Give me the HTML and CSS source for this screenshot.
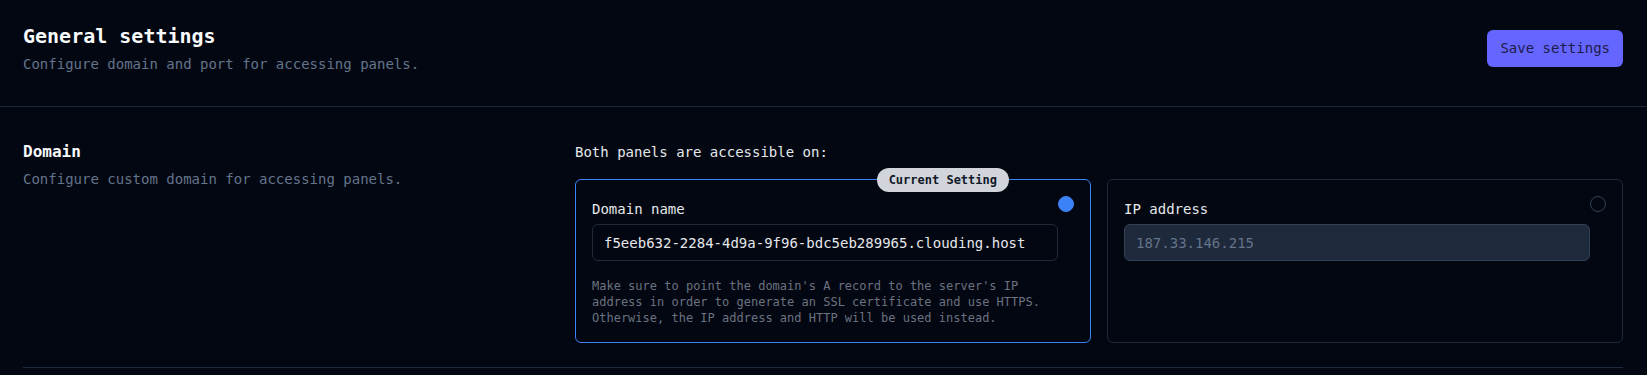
FILE: index.html
```html
<!DOCTYPE html>
<html lang="en">

<head>
    <meta charset="UTF-8">
    <meta name="viewport" content="width=device-width, initial-scale=1.0">
    <title>General settings</title>
    <link rel="stylesheet" href="styles.css">
</head>

<body>

    <div class="page-header">
        <div>
            <h1>General settings</h1>
            <p>Configure domain and port for accessing panels.</p>
        </div>
        <button class="save-btn">Save settings</button>
    </div>

    <div class="content">
        <div class="setting-row">
            <div class="setting-info">
                <h2>Domain</h2>
                <p>Configure custom domain for accessing panels.</p>
            </div>

            <div class="setting-body">
                <p class="setting-lead">Both panels are accessible on:</p>

                <div class="option-grid">
                    <div class="option-card selected">
                        <span class="badge">Current Setting</span>
                        <div class="option-main">
                            <label class="option-label">Domain name</label>
                            <input class="option-input" type="text" value="f5eeb632-2284-4d9a-9f96-bdc5eb289965.clouding.host">
                            <p class="option-help">Make sure to point the domain's A record to the server's IP address in order to generate an SSL certificate and use HTTPS. Otherwise, the IP address and HTTP will be used instead.</p>
                        </div>
                        <span class="radio checked"></span>
                    </div>

                    <div class="option-card">
                        <div class="option-main">
                            <label class="option-label">IP address</label>
                            <input class="option-input" type="text" value="187.33.146.215" disabled>
                        </div>
                        <span class="radio"></span>
                    </div>
                </div>
            </div>
        </div>
    </div>

</body>

</html>
```

FILE: styles.css
```css
* {
    margin: 0;
    padding: 0;
    box-sizing: border-box;
    font-family: "DejaVu Sans Mono", "Liberation Mono", monospace;
}

body {
    background-color: #030712;
    color: #e5e7eb;
}

.page-header {
    display: flex;
    justify-content: space-between;
    align-items: center;
    padding: 22px 24px 32px 23px;
    border-bottom: 1px solid #1e293b;
}

.page-header h1 {
    font-size: 20px;
    line-height: 28px;
    font-weight: 700;
    color: #f8fafc;
}

.page-header p {
    font-size: 14px;
    line-height: 20px;
    margin-top: 4px;
    color: #64748b;
}

.save-btn {
    background-color: #6466ff;
    color: #1e1b4b;
    border: none;
    border-radius: 6px;
    font-size: 14px;
    line-height: 21px;
    padding: 8px 13px;
    cursor: pointer;
}

.content {
    padding: 0 24px 0 23px;
}

.setting-row {
    display: grid;
    grid-template-columns: 552px 1fr;
    padding: 33px 0 24px;
    border-bottom: 1px solid #1e293b;
}

.setting-info h2 {
    font-size: 16px;
    line-height: 24px;
    font-weight: 700;
    color: #f8fafc;
}

.setting-info p {
    font-size: 14px;
    line-height: 20px;
    margin-top: 5px;
    color: #64748b;
}

.setting-lead {
    font-size: 14px;
    line-height: 24px;
    color: #e5e7eb;
}

.option-grid {
    display: grid;
    grid-template-columns: 1fr 1fr;
    gap: 16px;
    margin-top: 15px;
}

.option-card {
    position: relative;
    display: flex;
    border: 1px solid #1f2937;
    border-radius: 6px;
    padding: 16px;
}

.option-card.selected {
    border-color: #3b82f6;
}

.badge {
    position: absolute;
    top: -12px;
    right: 81px;
    height: 24px;
    line-height: 24px;
    padding: 0 12px;
    border-radius: 12px;
    background-color: #d1d5db;
    color: #111827;
    font-size: 12px;
    font-weight: 700;
}

.option-main {
    flex-grow: 1;
    display: flex;
    flex-direction: column;
}

.option-label {
    font-size: 14px;
    line-height: 26px;
    color: #e5e7eb;
}

.option-input {
    margin-top: 2px;
    height: 37px;
    padding: 0 11px;
    border: 1px solid #1f2937;
    border-radius: 6px;
    background-color: transparent;
    color: #e5e7eb;
    font-size: 14px;
    outline: none;
}

.option-input:disabled {
    background-color: #1e293b;
    border-color: #334155;
    color: #64748b;
}

.option-help {
    margin-top: 17px;
    font-size: 12px;
    line-height: 16px;
    color: #6b7280;
}

.radio {
    flex: none;
    width: 16px;
    height: 16px;
    border-radius: 50%;
    border: 1.5px solid #334155;
}

.radio.checked {
    background-color: #3b82f6;
    border-color: #3b82f6;
}
```
